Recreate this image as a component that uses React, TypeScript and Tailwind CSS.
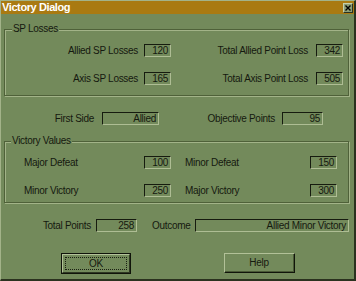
import React from "react";

const Box = ({ w, children }: { w: string; children?: React.ReactNode }) => (
  <div
    className={`${w} h-[13px] border border-t-[#161b0f] border-l-[#161b0f] border-b-[#aebd94] border-r-[#aebd94] text-right pr-[2px] leading-[11px] overflow-hidden whitespace-nowrap`}
  >
    {children}
  </div>
);

const Group = ({
  label,
  labelLeft,
  className,
  children,
}: {
  label: string;
  labelLeft: string;
  className: string;
  children: React.ReactNode;
}) => (
  <div
    className={`relative ml-[3px] mr-[5px] border border-[#4f6139] shadow-[inset_1px_1px_0_#a2b388,1px_1px_0_#a2b388] ${className}`}
  >
    <div className={`absolute -top-[7px] ${labelLeft} px-[1px] leading-[12px] bg-[#738a5b]`}>{label}</div>
    {children}
  </div>
);

export default function App() {
  return (
    <div className="w-[356px] h-[281px] bg-[#738a5b] font-['Liberation_Sans',Arial,sans-serif] text-[10px] tracking-[-0.3px] text-[#15190f] border-t border-l border-r-2 border-b-2 border-t-[#a3b389] border-l-[#a3b389] border-r-[#2b321f] border-b-[#2b321f] flex flex-col">
      {/* Title bar */}
      <div className="h-[13px] bg-[#a97a12] flex items-center pl-[1px]">
        <span className="text-white font-bold text-[11px] tracking-[-0.4px] leading-[13px]">Victory Dialog</span>
        <div className="ml-auto mr-[1px] w-[10px] h-[10px] bg-[#8c9e76] border border-t-[#c4d0ae] border-l-[#c4d0ae] border-b-[#2a3120] border-r-[#2a3120] flex items-center justify-center">
          <svg width="6" height="6" viewBox="0 0 6 6">
            <path d="M0.5 0.5 L5.5 5.5 M5.5 0.5 L0.5 5.5" stroke="#000" strokeWidth="1.4" />
          </svg>
        </div>
      </div>

      {/* SP Losses */}
      <Group label="SP Losses" labelLeft="left-[7px]" className="mt-[15px] pt-[14px] pb-[10px] flex flex-col gap-[15px]">
        <div className="flex items-center h-[13px]">
          <div className="w-[133px] text-right">Allied SP Losses</div>
          <div className="ml-[6px]"><Box w="w-[27px]">120</Box></div>
          <div className="w-[137px] text-right">Total Allied Point Loss</div>
          <div className="ml-[8px]"><Box w="w-[27px]">342</Box></div>
        </div>
        <div className="flex items-center h-[13px]">
          <div className="w-[133px] text-right">Axis SP Losses</div>
          <div className="ml-[6px]"><Box w="w-[27px]">165</Box></div>
          <div className="w-[137px] text-right">Total Axis Point Loss</div>
          <div className="ml-[8px]"><Box w="w-[27px]">505</Box></div>
        </div>
      </Group>

      {/* First side row */}
      <div className="mt-[16px] flex items-center h-[13px]">
        <div className="w-[93px] text-right">First Side</div>
        <div className="ml-[8px]"><Box w="w-[57px]">Allied</Box></div>
        <div className="w-[116px] text-right">Objective Points</div>
        <div className="ml-[7px]"><Box w="w-[41px]">95</Box></div>
      </div>

      {/* Victory Values */}
      <Group label="Victory Values" labelLeft="left-[6px]" className="mt-[16px] pt-[14px] pb-[5px] flex flex-col gap-[15px]">
        <div className="flex items-center h-[13px] pl-[19px]">
          <div className="w-[120px]">Major Defeat</div>
          <Box w="w-[27px]">100</Box>
          <div className="ml-[14px] w-[125px]">Minor Defeat</div>
          <Box w="w-[27px]">150</Box>
        </div>
        <div className="flex items-center h-[13px] pl-[19px]">
          <div className="w-[120px]">Minor Victory</div>
          <Box w="w-[27px]">250</Box>
          <div className="ml-[14px] w-[125px]">Major Victory</div>
          <Box w="w-[27px]">300</Box>
        </div>
      </Group>

      {/* Totals */}
      <div className="mt-[16px] flex items-center h-[13px]">
        <div className="w-[90px] text-right">Total Points</div>
        <div className="ml-[5px]"><Box w="w-[41px]">258</Box></div>
        <div className="ml-[15px] w-[43px]">Outcome</div>
        <Box w="w-[154px]">Allied Minor Victory</Box>
      </div>

      {/* Buttons */}
      <div className="mt-[21px] flex items-start">
        <div className="ml-[60px] w-[70px] h-[21px] border border-[#10140a] flex">
          <div className="flex-1 border border-t-[#b2c198] border-l-[#b2c198] border-b-[#2f3823] border-r-[#2f3823] p-[2px] flex">
            <div className="flex-1 border border-dotted border-[#1a1f12] flex items-center justify-center leading-[12px]">OK</div>
          </div>
        </div>
        <div className="ml-[93px] w-[71px] h-[20px] border border-t-[#b2c198] border-l-[#b2c198] border-b-[#10140a] border-r-[#10140a] flex">
          <div className="flex-1 border-b border-r border-[#4a5a36] flex items-center justify-center leading-[12px]">Help</div>
        </div>
      </div>
    </div>
  );
}
